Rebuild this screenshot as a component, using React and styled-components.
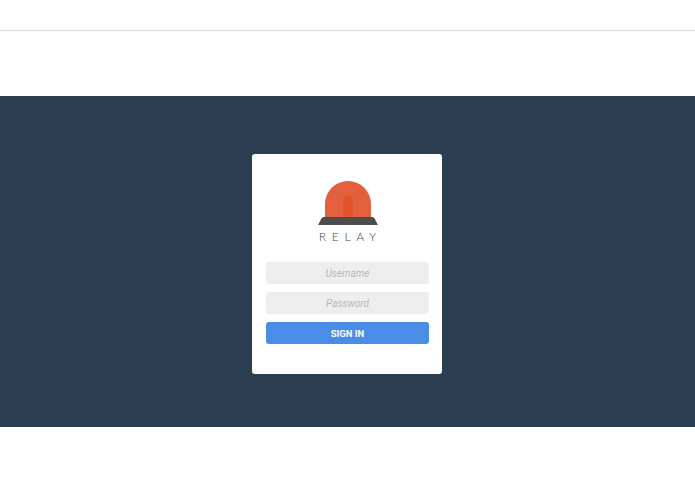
import React from 'react';
import styled, { createGlobalStyle } from 'styled-components';

const Global = createGlobalStyle`
  html, body {
    margin: 0;
    padding: 0;
    background: #ffffff;
  }
  body {
    font-family: Roboto, "Liberation Sans", sans-serif;
  }
`

const Page = styled.div`
  width: 695px;
  height: 494px;
  overflow: hidden;
  display: flex;
  flex-direction: column;
`

const TopRule = styled.div`
  margin-top: 30px;
  height: 1px;
  background: #d9d3e0;
`

const Hero = styled.div`
  margin-top: 65px;
  height: 331px;
  background: #2d3e50;
  display: flex;
  justify-content: center;
  padding-top: 58px;
  padding-right: 1px;
  box-sizing: border-box;
`

const Card = styled.div`
  width: 190px;
  height: 220px;
  box-sizing: border-box;
  background: #ffffff;
  border-radius: 3px;
  padding: 26px 13px 0 14px;
  display: flex;
  flex-direction: column;
  align-items: center;
`

const Brand = styled.div`
  font-family: Lato, "Liberation Sans", sans-serif;
  font-weight: 300;
  font-size: 12px;
  line-height: 12px;
  letter-spacing: 5.7px;
  margin-right: -5.7px;
  margin-top: 6px;
  margin-bottom: 19px;
  color: #444444;
`

const Field = styled.input`
  width: 100%;
  height: 22px;
  box-sizing: border-box;
  border: 0;
  outline: 0;
  padding: 0;
  margin-bottom: 8px;
  border-radius: 3px;
  background: #eeeeee;
  text-align: center;
  font-family: Roboto, "Liberation Sans", sans-serif;
  font-style: italic;
  font-size: 10px;

  &::placeholder {
    color: #b8b8b8;
    opacity: 1;
  }
`

const SignIn = styled.button`
  width: 100%;
  height: 22px;
  border: 0;
  padding: 0;
  border-radius: 3px;
  background: #4a8de6;
  color: #ffffff;
  font-family: Roboto, "Liberation Sans", sans-serif;
  font-weight: 700;
  font-size: 9.5px;
`

const Logo = () => (
  <svg width="60" height="45" viewBox="0 0 60 45">
    <path d="M7 37 V24 A23 23 0 0 1 53 24 V37 Z" fill="#e2603d" />
    <path d="M25 37 V20 A5 5 0 0 1 35 20 V37 Z" fill="#e4522a" />
    <path d="M5.500 37 H54.500 Q56 37 56.600 38.500 L60 45 H0 L3.400 38.500 Q4 37 5.500 37 Z" fill="#4d4d4d" />
  </svg>
)

export default function App() {
  return (
    <Page>
      <Global />
      <TopRule />
      <Hero>
        <Card>
          <Logo />
          <Brand>RELAY</Brand>
          <Field placeholder="Username" />
          <Field placeholder="Password" />
          <SignIn type="button">SIGN IN</SignIn>
        </Card>
      </Hero>
    </Page>
  );
}
